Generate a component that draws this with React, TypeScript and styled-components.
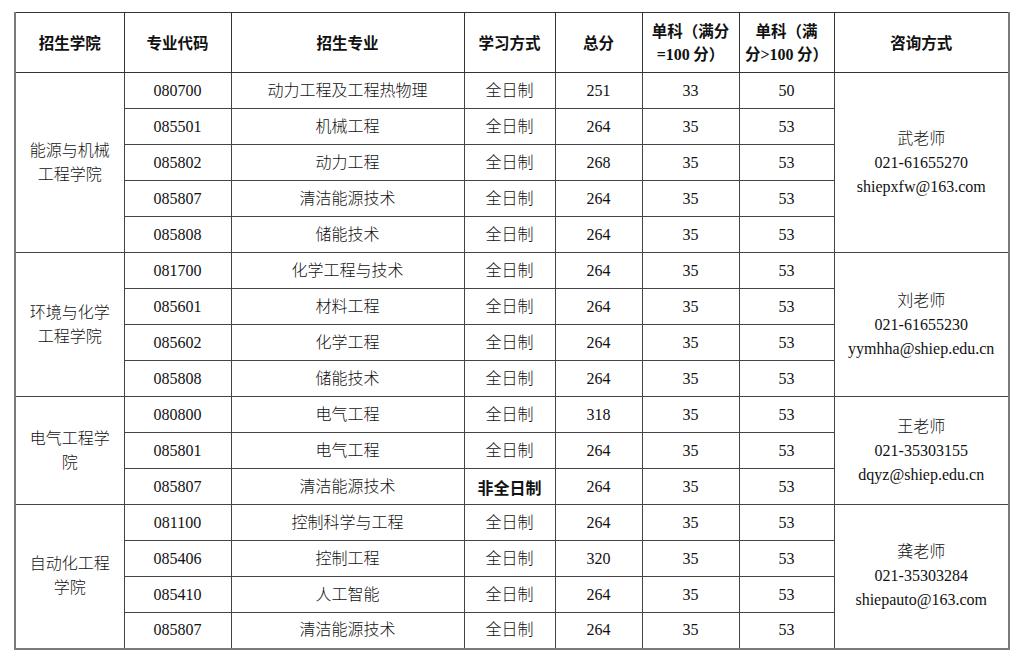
import React from 'react';
import styled, { createGlobalStyle } from 'styled-components';

const GlobalStyle = createGlobalStyle`
  html, body {
    margin: 0;
    padding: 0;
    background: #ffffff;
  }
  body {
    font-family: "Liberation Serif", "Noto Sans CJK SC", serif;
    color: #111;
  }
`;

interface Major {
  code: string;
  name: string;
  mode: string;
  total: number;
  s100: number;
  s150: number;
}

interface College {
  name: React.ReactNode;
  contact: string[];
  majors: Major[];
}

const ft = '全日制';

const colleges: College[] = [
  {
    name: (
      <>
        能源与机械
        <br />
        工程学院
      </>
    ),
    contact: ['武老师', '021-61655270', 'shiepxfw@163.com'],
    majors: [
      { code: '080700', name: '动力工程及工程热物理', mode: ft, total: 251, s100: 33, s150: 50 },
      { code: '085501', name: '机械工程', mode: ft, total: 264, s100: 35, s150: 53 },
      { code: '085802', name: '动力工程', mode: ft, total: 268, s100: 35, s150: 53 },
      { code: '085807', name: '清洁能源技术', mode: ft, total: 264, s100: 35, s150: 53 },
      { code: '085808', name: '储能技术', mode: ft, total: 264, s100: 35, s150: 53 },
    ],
  },
  {
    name: (
      <>
        环境与化学
        <br />
        工程学院
      </>
    ),
    contact: ['刘老师', '021-61655230', 'yymhha@shiep.edu.cn'],
    majors: [
      { code: '081700', name: '化学工程与技术', mode: ft, total: 264, s100: 35, s150: 53 },
      { code: '085601', name: '材料工程', mode: ft, total: 264, s100: 35, s150: 53 },
      { code: '085602', name: '化学工程', mode: ft, total: 264, s100: 35, s150: 53 },
      { code: '085808', name: '储能技术', mode: ft, total: 264, s100: 35, s150: 53 },
    ],
  },
  {
    name: (
      <>
        电气工程学
        <br />
        院
      </>
    ),
    contact: ['王老师', '021-35303155', 'dqyz@shiep.edu.cn'],
    majors: [
      { code: '080800', name: '电气工程', mode: ft, total: 318, s100: 35, s150: 53 },
      { code: '085801', name: '电气工程', mode: ft, total: 264, s100: 35, s150: 53 },
      { code: '085807', name: '清洁能源技术', mode: '非全日制', total: 264, s100: 35, s150: 53 },
    ],
  },
  {
    name: (
      <>
        自动化工程
        <br />
        学院
      </>
    ),
    contact: ['龚老师', '021-35303284', 'shiepauto@163.com'],
    majors: [
      { code: '081100', name: '控制科学与工程', mode: ft, total: 264, s100: 35, s150: 53 },
      { code: '085406', name: '控制工程', mode: ft, total: 320, s100: 35, s150: 53 },
      { code: '085410', name: '人工智能', mode: ft, total: 264, s100: 35, s150: 53 },
      { code: '085807', name: '清洁能源技术', mode: ft, total: 264, s100: 35, s150: 53 },
    ],
  },
];

const colWidths = [109, 107, 233, 91, 87, 97, 95, 175];

const Page = styled.div`
  padding: 12px 0 0 14px;
`;

const Table = styled.table`
  border-collapse: collapse;
  table-layout: fixed;
  width: 994px;
  border: 2px solid #7a7a7a;
  border-top-width: 1px;
  border-top-color: #555;
`;

const HeadCell = styled.th`
  height: 59px;
  padding: 0 4px;
  border: 1px solid #333;
  font-family: "Noto Sans CJK SC", "Liberation Sans", sans-serif;
  font-weight: 700;
  font-size: 15.5px;
  line-height: 23px;
  text-align: center;
  vertical-align: middle;
  color: #111;

  & .num {
    font-family: "Liberation Serif", "Noto Sans CJK SC", serif;
    font-weight: 700;
    font-size: 16px;
  }
`;

const Row = styled.tr`
  height: 36px;
`;

const Cell = styled.td<{ $bold?: boolean; $block?: boolean }>`
  padding: 0 4px;
  border: 1px solid #444;
  font-family: ${p =>
    p.$bold
      ? '"Noto Sans CJK SC", "Liberation Sans", sans-serif'
      : '"Liberation Serif", "Noto Sans CJK SC", serif'};
  font-weight: ${p => (p.$bold ? 700 : 300)};
  font-size: 16px;
  line-height: ${p => (p.$block ? '24px' : '20px')};
  text-align: center;
  vertical-align: middle;
  color: #111;
  white-space: nowrap;
`;

const header: React.ReactNode[] = [
  '招生学院',
  '专业代码',
  '招生专业',
  '学习方式',
  '总分',
  <>
    单科（满分
    <br />
    <span className='num'>=100</span> 分）
  </>,
  <>
    单科（满
    <br />
    分<span className='num'>&gt;100</span> 分）
  </>,
  '咨询方式',
];

export default function App() {
  return (
    <Page>
      <GlobalStyle />
      <Table>
        <colgroup>
          {colWidths.map((w, i) => (
            <col key={i} style={{ width: w }} />
          ))}
        </colgroup>
        <thead>
          <tr>
            {header.map((h, i) => (
              <HeadCell key={i}>{h}</HeadCell>
            ))}
          </tr>
        </thead>
        <tbody>
          {colleges.map((c, ci) =>
            c.majors.map((m, mi) => (
              <Row key={`${ci}-${mi}`}>
                {mi === 0 && (
                  <Cell rowSpan={c.majors.length} $block>
                    {c.name}
                  </Cell>
                )}
                <Cell>{m.code}</Cell>
                <Cell>{m.name}</Cell>
                <Cell $bold={m.mode !== ft}>{m.mode}</Cell>
                <Cell>{m.total}</Cell>
                <Cell>{m.s100}</Cell>
                <Cell>{m.s150}</Cell>
                {mi === 0 && (
                  <Cell rowSpan={c.majors.length} $block>
                    {c.contact.map((line, li) => (
                      <div key={li}>{line}</div>
                    ))}
                  </Cell>
                )}
              </Row>
            )),
          )}
        </tbody>
      </Table>
    </Page>
  );
}
